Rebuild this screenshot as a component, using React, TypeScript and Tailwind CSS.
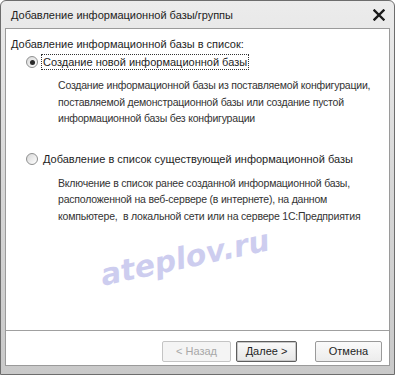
import React from 'react'

const font = { fontFamily: '"Liberation Sans", Arial, sans-serif' }

function Radio({ checked }: { checked?: boolean }) {
  return (
    <span className="w-[12px] h-[12px] rounded-full border border-[#8e8f8f] bg-gradient-to-br from-[#d8d8d8] to-[#ffffff] flex items-center justify-center shrink-0">
      {checked && <span className="w-[5px] h-[5px] rounded-full bg-[#2a2a2a]" />}
    </span>
  )
}

export default function App() {
  return (
    <div className="w-[395px] h-[375px] bg-white text-[#1e1e1e] text-[11px]" style={font}>
      <div className="w-full h-full flex flex-col border border-[#6d6d6d] rounded-t-[6px] bg-gradient-to-b from-[#ececec] via-[#d6d6d6] to-[#c9c9c9] overflow-hidden">
        {/* Title bar */}
        <div className="h-[27px] flex items-center justify-between pl-[10px] pr-[9px] shrink-0">
          <span className="text-[11px] text-[#222] pt-[1px]">Добавление информационной базы/группы</span>
          <svg width="12" height="12" viewBox="0 0 12 12" className="mt-[1px]">
            <path d="M1.5 1.5 L10.5 10.5 M10.5 1.5 L1.5 10.5" stroke="#1a1a1a" strokeWidth="2.4" strokeLinecap="square" />
          </svg>
        </div>

        {/* Client area */}
        <div className="relative flex-1 mx-[4px] bg-white border border-[#9a9a9a] flex flex-col">
          <div className="flex-1 pl-[5px] pr-[6px] pt-[7px] whitespace-nowrap">
            <div className="leading-[16px]">Добавление информационной базы в список:</div>

            <div className="flex items-center mt-[2px] pl-[15px] gap-[3px]">
              <Radio checked />
              <span className="border border-dotted border-[#333] px-[1px] leading-[14px]">Создание новой информационной базы</span>
            </div>
            <div className="pl-[47px] mt-[7px] text-[#333] text-[10.5px] tracking-[-0.2px] leading-[16.5px]">
              <div>Создание информационной базы из поставляемой конфигурации,</div>
              <div>поставляемой демонстрационной базы или создание пустой</div>
              <div>информационной базы без конфигурации</div>
            </div>

            <div className="flex items-center mt-[24px] pl-[15px] gap-[3px]">
              <Radio />
              <span className="leading-[16px] px-[2px]">Добавление в список существующей информационной базы</span>
            </div>
            <div className="pl-[47px] mt-[8px] text-[#333] text-[10.5px] tracking-[-0.2px] leading-[16.5px]">
              <div>Включение в список ранее созданной информационной базы,</div>
              <div>расположенной на веб-сервере (в интернете), на данном</div>
              <div>компьютере,&nbsp; в локальной сети или на сервере 1С:Предприятия</div>
            </div>
          </div>

          {/* Watermark */}
          <div
            className="absolute left-[93px] top-[214px] -rotate-[12deg] text-[30px] leading-none font-bold italic text-[#cdcdef] pointer-events-none select-none"
            style={{ fontFamily: '"DejaVu Sans", Verdana, sans-serif' }}
          >
            ateplov.ru
          </div>

          {/* Footer */}
          <div className="border-t border-[#a0a0a0] h-[35px] flex items-start justify-end gap-[4px] pr-[7px] pt-[10px] shrink-0">
            <button className="w-[69px] h-[21px] border border-[#c4c4c4] bg-[#f4f4f4] text-[#a8a8a8] rounded-[2px]">&lt; Назад</button>
            <button className="w-[61px] h-[21px] border border-[#5e5e5e] bg-gradient-to-b from-[#fafafa] to-[#e6e6e6] rounded-[2px] shadow-[inset_0_0_0_1px_#c8c8c8] ml-[1px]">Далее &gt;</button>
            <button className="w-[67px] h-[21px] border border-[#9a9a9a] bg-gradient-to-b from-[#fafafa] to-[#ececec] rounded-[2px] ml-[14px]">Отмена</button>
          </div>
        </div>

        <div className="h-[8px] shrink-0" />
      </div>
    </div>
  )
}
